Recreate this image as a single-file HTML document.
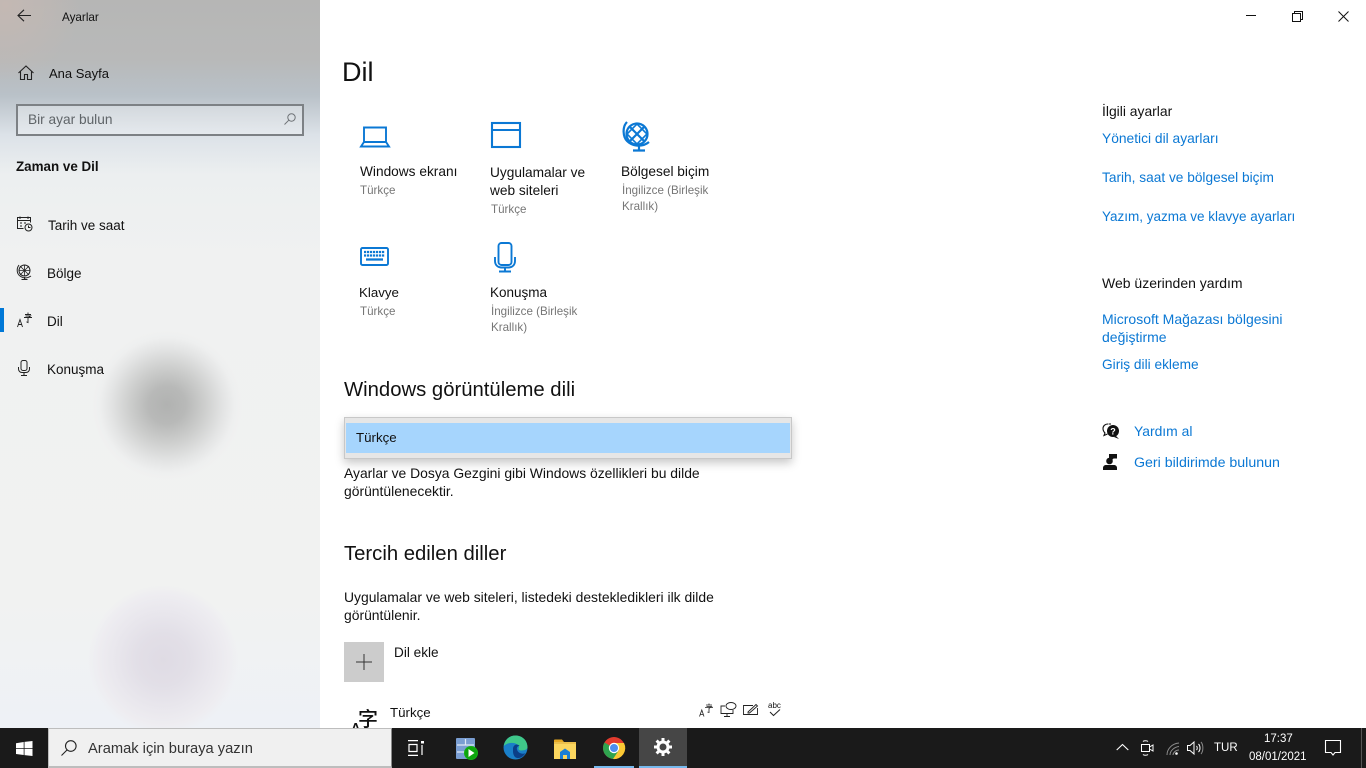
<!DOCTYPE html>
<html lang="tr"><head><meta charset="utf-8"><title>Ayarlar</title>
<style>
html,body{margin:0;padding:0;width:1366px;height:768px;overflow:hidden;background:#fff;font-family:"Liberation Sans",sans-serif;color:#111}
.t{position:absolute;white-space:nowrap;font-size:13.9px;line-height:18px}
.m{font-size:13.700px}
.s{font-size:13.5px}
.g{color:#767676;font-size:11.6px;line-height:16px}
.l{color:#0b78d4;font-size:13.9px}
.h{font-size:20.300px;line-height:26px}
svg{position:absolute;overflow:visible}
#side{position:absolute;left:0;top:0;width:320px;height:728px;overflow:hidden;background:linear-gradient(180deg,#b6b6b5 0,#b8b9b9 60px,#b9c1c8 95px,#dce2e8 135px,#eceff0 175px,#f0f1f1 260px,#f1f2f1 600px,#eef1f6 728px)}
.b{position:absolute;border-radius:50%}
</style></head><body>
<div id="side">
<div class="b" style="left:92px;top:330px;width:150px;height:150px;background:radial-gradient(circle closest-side,#b1b2b1 0,#b8b9b8 25%,#cdcecd 50%,#e3e4e4 75%,#eeefef 90%,rgba(240,241,241,0) 100%)"></div>
<div class="b" style="left:88px;top:585px;width:150px;height:150px;background:radial-gradient(circle closest-side,#dfdbe4 0,#e2dfe7 35%,#e9e7ed 65%,#eeedf1 88%,rgba(240,241,243,0) 100%)"></div>
<div class="b" style="left:-70px;top:-70px;width:150px;height:150px;background:radial-gradient(circle closest-side,#c4b8b3 0,rgba(190,185,183,0) 100%)"></div>
</div>

<!-- title bar -->
<svg style="left:17px;top:9px" width="16" height="14" fill="none" stroke="#222" stroke-width="1.1"><path d="M1 6.500H14M7 .8 1 6.500l6 5.700"/></svg>
<div class="t" style="left:62px;top:9px;font-size:11.700px">Ayarlar</div>
<svg style="left:18px;top:65px" width="16" height="16" fill="none" stroke="#222" stroke-width="1.1"><path d="M.5 8 8 1l7.500 7M2.500 6.500V14.500H6.500V9.500H9.500V14.500H13.500V6.500"/></svg>
<div class="t" style="left:49px;top:65px;font-size:13px">Ana Sayfa</div>

<div style="position:absolute;left:16px;top:104px;width:284px;height:28px;border:2px solid #7d8185;background:rgba(255,255,255,.28)"></div>
<div class="t" style="left:28px;top:111px;color:#5f6468;font-size:13.700px">Bir ayar bulun</div>
<svg style="left:284px;top:113px" width="12" height="12" fill="none" stroke="#6f7377" stroke-width="1"><circle cx="7.500" cy="4.500" r="3.700"/><path d="M4.800 7.200 .5 11.500"/></svg>
<div class="t" style="left:16px;top:158px;font-weight:bold;font-size:13.400px">Zaman ve Dil</div>

<svg style="left:17px;top:216px" width="16" height="16" fill="none" stroke="#222" stroke-width="1"><path d="M6.500 12.500H.5V1.500H13.500V6.500M.5 4.500H13.500M3 3V.5M11 3V.5M3 7h2M7 7h2M3 10h2"/><circle cx="11.500" cy="11.500" r="3.500"/><path d="M11.500 9.500V11.500H13.500"/></svg>
<div class="t s" style="left:48px;top:217px">Tarih ve saat</div>
<svg style="left:17px;top:264px" width="16" height="16" fill="none" stroke="#222" stroke-width="1"><circle cx="7.500" cy="6.500" r="5.500"/><path d="M3 2 12 11M12 2 3 11M7.500 1V12M2 6.500H13" stroke-width=".8"/><path d="M2 1C-1 5 0 10 3 12 7 15 11 14 14 12M7.500 13V15.500M4.500 15.500H10.500"/></svg>
<div class="t s" style="left:47px;top:265px">Bölge</div>
<div style="position:absolute;left:0;top:308px;width:4px;height:24px;background:#0078d7"></div>
<svg style="left:17px;top:312px" width="16" height="16" fill="none" stroke="#222" stroke-width=".9"><path d="M.5 15 3 7.500 5.500 15M1.400 12.500H4.600M8 2.500H14M11 .5V2.500M7 5.500H15M8.500 4 13.500 4 11 6V10.500L9.500 9.800"/></svg>
<div class="t s" style="left:47px;top:313px">Dil</div>
<svg style="left:18px;top:360px" width="12" height="16" fill="none" stroke="#222" stroke-width="1"><rect x="3" y=".5" width="6" height="10" rx="2"/><path d="M.5 7V9C.5 11 2 12.500 4 12.500H8C10 12.500 11.500 11 11.500 9V7M6 12.500V15.500M3 15.500H9"/></svg>
<div class="t s" style="left:47px;top:361px">Konuşma</div>

<!-- main -->
<div class="t" style="left:342px;top:55px;font-size:27px;line-height:34px;color:#111">Dil</div>

<svg style="left:360px;top:126px" width="30" height="22" fill="none" stroke="#0b78d4" stroke-width="1.900"><path d="M4 16V1.500H26V16M1 20.500H29L26 16H4Z"/></svg>
<div class="t m" style="left:360px;top:163px">Windows ekranı</div>
<div class="t g" style="left:360px;top:183px">Türkçe</div>

<svg style="left:491px;top:122px" width="30" height="26" fill="none" stroke="#0b78d4" stroke-width="2.100"><rect x="1" y="1" width="28" height="24"/><path d="M1 8H29"/></svg>
<div class="t m" style="left:490px;top:164px">Uygulamalar ve<br>web siteleri</div>
<div class="t g" style="left:491px;top:202px">Türkçe</div>

<svg style="left:623px;top:121px" width="28" height="30" fill="none" stroke="#0b78d4" stroke-width="2.200"><circle cx="14" cy="13" r="10.500"/><path d="M6.500 5.500 21.500 20.500M21.500 5.500 6.500 20.500"/><path d="M14 3 24 13 14 23 4 13Z" stroke-width="1.600"/><path d="M4 1C-1 6 0 16 4 20 10 26 20 26 26 21"/><path d="M16 25V29M10 29.500H22"/></svg>
<div class="t m" style="left:621px;top:163px">Bölgesel biçim</div>
<div class="t g" style="left:622px;top:183px">İngilizce (Birleşik<br>Krallık)</div>

<svg style="left:360px;top:247px" width="29" height="19" fill="none"><rect x="1" y="1" width="27" height="17" rx="1.500" stroke="#0b78d4" stroke-width="1.900"/><path d="M4 5H25M4 8.500H25" stroke="#0b78d4" stroke-width="2.200" stroke-dasharray="2.200 .8"/><path d="M6 12.500H23" stroke="#0b78d4" stroke-width="2.200"/></svg>
<div class="t" style="left:359px;top:284px;font-size:13.300px">Klavye</div>
<div class="t g" style="left:360px;top:304px">Türkçe</div>

<svg style="left:494px;top:242px" width="22" height="31" fill="none" stroke="#0b78d4" stroke-width="1.900"><rect x="4.500" y="1" width="13" height="22" rx="3"/><path d="M1 15V19C1 23 4 25.500 7 25.500H15C18 25.500 21 23 21 19V15M11 25.500V29.500M5 29.500H17"/></svg>
<div class="t" style="left:490px;top:284px;font-size:13.500px">Konuşma</div>
<div class="t g" style="left:491px;top:304px">İngilizce (Birleşik<br>Krallık)</div>

<div class="t h" style="left:344px;top:377px">Windows görüntüleme dili</div>

<div style="position:absolute;left:344px;top:417px;width:446px;height:40px;background:#e6e6e6;border:1px solid #c8c8c8;box-shadow:0 4px 9px rgba(0,0,0,.22)"></div>
<div style="position:absolute;left:346px;top:423px;width:444px;height:30px;background:#a6d5fd"></div>
<div class="t" style="left:356px;top:429px;font-size:13.300px">Türkçe</div>

<div class="t" style="left:344px;top:464px">Ayarlar ve Dosya Gezgini gibi Windows özellikleri bu dilde<br>görüntülenecektir.</div>

<div class="t h" style="left:344px;top:541px">Tercih edilen diller</div>
<div class="t" style="left:344px;top:588px">Uygulamalar ve web siteleri, listedeki destekledikleri ilk dilde<br>görüntülenir.</div>

<div style="position:absolute;left:344px;top:642px;width:40px;height:40px;background:#cccccc"></div>
<svg style="left:356px;top:654px" width="16" height="16" stroke="#333" stroke-width="1"><path d="M0 8H16M8 0V16"/></svg>
<div class="t" style="left:394px;top:644px;font-size:13.600px">Dil ekle</div>

<div style="position:absolute;left:320px;top:700px;width:1046px;height:28px;overflow:hidden">
<div class="t" style="left:31px;top:20px;font-size:13px;font-weight:bold;line-height:16px">A</div>
<div class="t" style="left:38px;top:6px;font-size:20px;line-height:24px;font-family:'Noto Sans CJK SC',sans-serif;font-weight:500">字</div>
</div>
<div class="t" style="left:390px;top:704px;font-size:13.300px">Türkçe</div>
<svg style="left:699px;top:703px" width="14" height="14" fill="none" stroke="#222" stroke-width=".8"><path d="M.5 13.500 2.800 7 5 13.500M1.300 11.500H4.300M7 2H13M10 .5V2M6 4.500H14M7.500 3.500H12.500L10 5.500V9.500L8.500 9"/></svg>
<svg style="left:720px;top:702px" width="17" height="15" fill="none" stroke="#222" stroke-width=".9"><path d="M5 4H1V11.500H13V8M7 11.500V14M4 14.500H10"/><ellipse cx="11" cy="4" rx="5" ry="3.500"/></svg>
<svg style="left:743px;top:703px" width="16" height="13" fill="none" stroke="#222" stroke-width=".9"><path d="M10 2.500H.5V11.500H14.500V5M5 9 13 1.500 14.500 3 6.500 10H5Z"/></svg>
<div class="t" style="left:768px;top:701px;font-size:8px;line-height:10px">abc</div>
<svg style="left:769px;top:709px" width="12" height="8" fill="none" stroke="#222"><path d="M1 3 4.500 6.500 11 .5"/></svg>

<!-- right column -->
<div class="t" style="left:1102px;top:102px">İlgili ayarlar</div>
<div class="t l" style="left:1102px;top:130px;font-size:13.800px">Yönetici dil ayarları</div>
<div class="t l" style="left:1102px;top:169px;font-size:13.700px">Tarih, saat ve bölgesel biçim</div>
<div class="t l" style="left:1102px;top:208px;font-size:13.500px">Yazım, yazma ve klavye ayarları</div>
<div class="t" style="left:1102px;top:274px;font-size:14px">Web üzerinden yardım</div>
<div class="t l" style="left:1102px;top:310px;font-size:14px">Microsoft Mağazası bölgesini<br>değiştirme</div>
<div class="t l" style="left:1102px;top:356px;font-size:13.700px">Giriş dili ekleme</div>

<svg style="left:1102px;top:423px" width="18" height="17"><path d="M6 1C3 1 1 3 1 5.500 1 7.500 2 9 3 10L2 12.500 5.500 11" fill="none" stroke="#111" stroke-width="1.100"/><path d="M6.500 1H9" stroke="#111" fill="none"/><circle cx="11" cy="8" r="6" fill="#111"/><path d="M14 13 17 16 12 14Z" fill="#111"/><text x="11" y="11.500" font-size="9" font-weight="bold" fill="#fff" text-anchor="middle" font-family="Liberation Sans">?</text></svg>
<div class="t l" style="left:1134px;top:422px;font-size:13.900px">Yardım al</div>
<svg style="left:1103px;top:454px" width="15" height="16" fill="#111"><path d="M6 0H14V4.500H10.500L8.500 6.500V4.500H6Z"/><circle cx="6.500" cy="7" r="3.300"/><path d="M0 16V14C0 12 1.500 11 3 11H11C12.500 11 14 12 14 14V16Z"/></svg>
<div class="t l" style="left:1134px;top:454px;font-size:14.200px">Geri bildirimde bulunun</div>

<!-- window controls -->
<svg style="left:1246px;top:15px" width="11" height="2"><path d="M0 .5H10" stroke="#111"/></svg>
<svg style="left:1292px;top:11px" width="11" height="11" fill="none" stroke="#111"><path d="M.5 2.500H8.500V10.500H.5ZM2.500 2.500V.5H10.500V8.500H8.500"/></svg>
<svg style="left:1338px;top:11px" width="11" height="11" fill="none" stroke="#111"><path d="M.5.5 10.500 10.500M10.500.5 .5 10.500"/></svg>

<!-- taskbar -->
<div style="position:absolute;left:0;top:728px;width:1366px;height:40px;background:#1a1a1a"></div>
<svg style="left:16px;top:741px" width="17" height="15" fill="#fff"><path d="M0 2.200 7.700 1V7.200H0ZM8.500.9 16.500 0V7.200H8.500ZM0 8H7.700V14L0 13ZM8.500 8H16.500V15L8.500 14.100Z"/></svg>
<div style="position:absolute;left:48px;top:728px;width:344px;height:40px;box-sizing:border-box;background:#f0f0f0;border:1px solid #bdbdbd;border-bottom-width:2px;border-right:1px solid #8a8a8a"></div>
<svg style="left:61px;top:740px" width="16" height="16" fill="none" stroke="#222" stroke-width="1.100"><circle cx="9.800" cy="6" r="5.300"/><path d="M6 10 .5 15.500"/></svg>
<div class="t" style="left:88px;top:739px;font-size:14.700px;line-height:20px;color:#333">Aramak için buraya yazın</div>

<svg style="left:407px;top:740px" width="18" height="16" fill="none" stroke="#fff" stroke-width="1.200"><path d="M1 .6H11M1 15.400H11M2 4.500H10V11.500H2ZM15 5V15"/><rect x="14" y="1" width="3" height="2.500" fill="#fff" stroke="none"/></svg>

<svg style="left:456px;top:738px" width="22" height="24"><rect x="0" y="0" width="19" height="21" rx="1" fill="#7a9ed2"/><path d="M1 7H18M1 14H18M9.500 1V7" stroke="#dfe8f5" stroke-width="1.200"/><circle cx="15" cy="15" r="7" fill="#14b014"/><circle cx="15" cy="15" r="6" fill="#0da50d"/><path d="M12.500 11 18.500 15 12.500 19Z" fill="#fff"/></svg>

<svg style="left:503px;top:735px" width="25" height="25" viewBox="0 0 25 25"><circle cx="12.500" cy="12.500" r="12" fill="#1a7fc8"/><path d="M.8 11C2 4 7 .5 12.500 .5 19 .5 24.500 5 24.500 12.500 24.500 14 22 15.500 18.500 15.500 15 15.500 15 13.500 16 12 15 7.500 6 6 .8 11Z" fill="#3fc88a"/><path d="M10 14C10 10 14 8 16.500 11 13 11 13 15 16 17.500 19 19.500 22 18.500 22.500 18 19 24 11 26 10 17Z" fill="#0b3f88"/></svg>

<svg style="left:554px;top:739px" width="22" height="20"><path d="M0 1.500C0 .8.500.5 1 .5H8L10 3H21V6H0Z" fill="#e5a823"/><rect x="0" y="3" width="22" height="17" fill="#fbd65f"/><rect x="0" y="3" width="22" height="2" fill="#ecc04c"/><path d="M6 13 11 9.500 16 13V20H13V16H9V20H6Z" fill="#1b7fd6"/></svg>

<svg style="left:603px;top:737px" width="22" height="22" viewBox="0 0 22 22"><circle cx="11" cy="11" r="11" fill="#e33b2e"/><path d="M11 11 1.500 5.500A11 11 0 0 0 11 22L16 13Z" fill="#2fa44f"/><path d="M11 6H21A11 11 0 0 1 10 22L16 13Z" fill="#fcc934"/><circle cx="11" cy="11" r="5.200" fill="#fff"/><circle cx="11" cy="11" r="4" fill="#4d8ef0"/></svg>
<div style="position:absolute;left:594px;top:766px;width:40px;height:2px;background:#76b9ed"></div>

<div style="position:absolute;left:639px;top:728px;width:48px;height:40px;background:#464646"></div>
<div style="position:absolute;left:639px;top:766px;width:48px;height:2px;background:#76b9ed"></div>
<svg style="left:654px;top:738px" width="18" height="18" viewBox="0 0 18 18" fill="none"><circle cx="9" cy="9" r="5" stroke="#fff" stroke-width="3"/><path d="M9 0V3M9 15V18M0 9H3M15 9H18M2.600 2.600 4.800 4.800M13.200 13.200 15.400 15.400M15.400 2.600 13.200 4.800M4.800 13.200 2.600 15.400" stroke="#fff" stroke-width="3"/></svg>

<!-- tray -->
<svg style="left:1116px;top:743px" width="13" height="8" fill="none" stroke="#fff" stroke-width="1.100"><path d="M.7 7 6.500 1.500 12.300 7"/></svg>
<svg style="left:1141px;top:740px" width="13" height="16" fill="none" stroke="#fff"><path d="M2 1.500C3 .5 6 .5 7 1.500M2 14.500C3 15.500 6 15.500 7 14.500"/><rect x=".5" y="4.500" width="8" height="7"/><path d="M8.500 7 12 5V11L8.500 9"/></svg>
<svg style="left:1166px;top:742px" width="14" height="14" fill="none" stroke="#8e8e8e"><path d="M1 13C1 7 6 1.500 13 1M4 13C4 9 8 5 13 4.500M7 13C7 11 9.500 8 13 8"/><circle cx="10.500" cy="11.500" r="1.300" fill="#fff" stroke="none"/></svg>
<svg style="left:1187px;top:741px" width="17" height="14" fill="none" stroke="#fff"><path d="M.5 4.500H3L7 1V13L3 9.500H.5Z"/><path d="M9.500 5C10.500 6 10.500 8 9.500 9M11.500 3C13.500 5 13.500 9 11.500 11"/><path d="M14 1C16.500 4 16.500 10 14 13" stroke="#888"/></svg>
<div class="t" style="left:1214px;top:739px;color:#fff;font-size:11.500px">TUR</div>
<div class="t" style="left:1264px;top:731px;color:#fff;font-size:11.500px;line-height:16px">17:37</div>
<div class="t" style="left:1249px;top:749px;color:#fff;font-size:11.500px;line-height:16px">08/01/2021</div>
<svg style="left:1325px;top:740px" width="16" height="16" fill="none" stroke="#fff" stroke-width="1.100"><path d="M.5.5H15.500V12.500H10L8 15 6 12.500H.5Z"/></svg>
<div style="position:absolute;left:1361px;top:728px;width:1px;height:40px;background:#555"></div>
</body></html>
